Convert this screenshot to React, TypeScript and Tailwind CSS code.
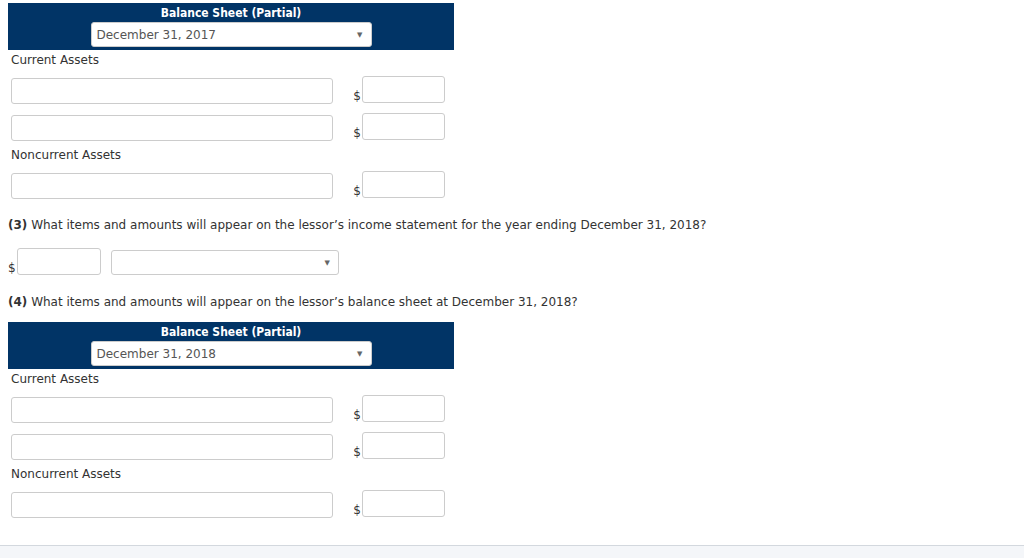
import React from 'react';

const font = { fontFamily: '"DejaVu Sans", Verdana, sans-serif' };

function Select({ value, className }: { value?: string; className: string }) {
  return (
    <div
      className={`relative flex items-center rounded-[3px] border border-[#cccccc] bg-white pl-[5px] text-[12px] text-[#555555] ${className}`}
    >
      <span>{value}</span>
      <span className="absolute right-[8px] top-1/2 -translate-y-1/2 text-[7px] text-[#666666]">▼</span>
    </div>
  );
}

function Field() {
  return <input type="text" className="h-full w-full rounded-[3px] border border-[#cccccc] bg-white outline-none" />;
}

function AmountRow() {
  return (
    <div className="flex h-[28px] items-start">
      <div className="ml-[3px] mt-[2px] h-[26px] w-[322px]">
        <Field />
      </div>
      <span className="mt-[12px] w-[29px] pr-[1px] text-right text-[12px] leading-[16px] text-[#333333]">$</span>
      <div className="h-[27px] w-[83px]">
        <Field />
      </div>
    </div>
  );
}

function BalanceSheet({ date }: { date: string }) {
  return (
    <div>
      <div className="flex h-[47px] w-[446px] flex-col items-center bg-[#013466]">
        <div
          className="h-[19px] pt-[2px] text-[12px] font-bold leading-[17px] text-white"
          style={{ fontFamily: '"DejaVu Sans Condensed", "DejaVu Sans", sans-serif', fontStretch: 'condensed' }}
        >
          Balance Sheet (Partial)
        </div>
        <Select value={date} className="h-[25px] w-[281px]" />
      </div>
      <div className="mt-[2px] pl-[3px] text-[12px] leading-[16px] text-[#333333]">Current Assets</div>
      <div className="mt-[8px]">
        <AmountRow />
      </div>
      <div className="mt-[9px]">
        <AmountRow />
      </div>
      <div className="mt-[6px] pl-[3px] text-[12px] leading-[16px] text-[#333333]">Noncurrent Assets</div>
      <div className="mt-[8px]">
        <AmountRow />
      </div>
    </div>
  );
}

export default function App() {
  return (
    <div className="min-h-screen bg-white" style={font}>
      <div className="px-[8px] pt-[3px]">
        <BalanceSheet date="December 31, 2017" />

        <p className="mt-[18px] text-[12px] leading-[16px] text-[#333333]">
          <b>(3)</b> What items and amounts will appear on the lessor’s income statement for the year ending December 31, 2018?
        </p>

        <div className="mt-[15px] flex h-[27px] items-start">
          <span className="mt-[12px] w-[9px] text-[12px] leading-[16px] text-[#333333]">$</span>
          <div className="h-[27px] w-[84px]">
            <Field />
          </div>
          <Select className="ml-[10px] mt-[2px] h-[25px] w-[228px]" />
        </div>

        <p className="mt-[19px] text-[12px] leading-[16px] text-[#333333]">
          <b>(4)</b> What items and amounts will appear on the lessor’s balance sheet at December 31, 2018?
        </p>

        <div className="mt-[12px]">
          <BalanceSheet date="December 31, 2018" />
        </div>
      </div>
      <div className="mt-[27px] h-[14px] border-t border-[#d3d8de] bg-[#f4f6f9]" />
    </div>
  );
}
